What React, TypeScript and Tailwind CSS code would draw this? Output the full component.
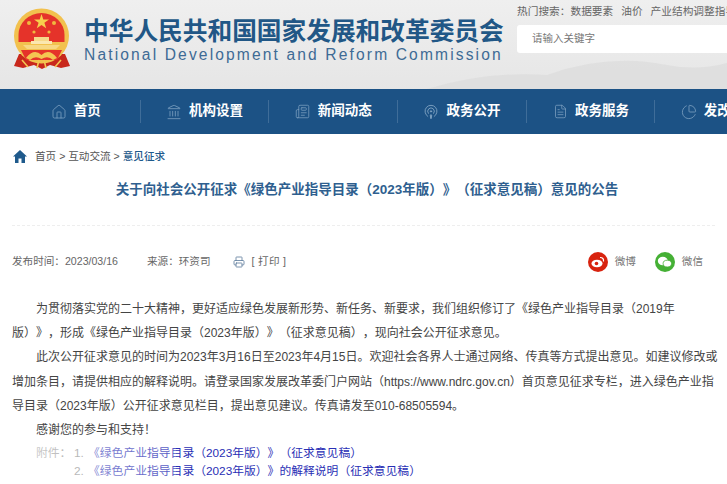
import { Home, Landmark, Newspaper, FileText, ChartPie, Printer, Podcast } from "lucide-react";

const font = { fontFamily: '"Liberation Sans","Noto Sans CJK SC",sans-serif' };

const fw = (s: string) =>
  s
    .replace(/,/g, "\uFF0C")
    .replace(/\(/g, "\uFF08")
    .replace(/\)/g, "\uFF09")
    .replace(/:(?!\/)/g, "\uFF1A")
    .replace(/!/g, "\uFF01");

function Emblem() {
  return (
    <svg width="58" height="62" viewBox="0 0 58 62" className="shrink-0">
      <path d="M6 46 L1 58 L10 60 L21 57 L29 61 L37 57 L48 60 L57 58 L52 46 Z" fill="#c8281c" />
      <circle cx="28.5" cy="28" r="27.5" fill="#f2c14e" />
      <path d="M5.5 27 A23 22 0 0 1 51.5 27 L51.5 34 L5.5 34 Z" fill="#e5332a" />
      <path d="M28.5 6 l1.8 5.4 5.7 0 -4.6 3.4 1.8 5.5 -4.7 -3.4 -4.7 3.4 1.8 -5.5 -4.6 -3.4 5.7 0z" fill="#f6d04d" />
      <circle cx="16" cy="15" r="2" fill="#f0b93f" />
      <circle cx="41" cy="15" r="2" fill="#f0b93f" />
      <circle cx="21" cy="24" r="1.6" fill="#f0b93f" />
      <circle cx="36" cy="24" r="1.6" fill="#f0b93f" />
      <rect x="18" y="33" width="21" height="3" fill="#fbe7b0" />
      <rect x="21" y="29" width="15" height="4" fill="#f6d98a" />
      <path d="M10 37 H47 L43 41 H14 Z" fill="#f7d884" />
      <path d="M8 42 H49 L44 52 H13 Z" fill="#e5332a" />
      <path d="M13 50 Q21 40 28.5 47 Q36 40 44 50 L40 52 Q35 47 28.5 51 Q22 47 17 52 Z" fill="#f4c552" />
      <path d="M9 52 L15 59 M48 52 L42 59 M26 52 L24 60 M31 52 L33 60" stroke="#f4c552" strokeWidth="1.6" />
    </svg>
  );
}

function NavItem({ icon, label }: { icon: React.ReactNode; label: string }) {
  return (
    <div className="flex h-full w-[127.7px] shrink-0 items-center justify-center gap-[7px] whitespace-nowrap text-[13.5px] font-bold text-white">
      <span className="flex w-[16px] justify-center text-[#7fa2c2]">{icon}</span>
      <span>{label}</span>
    </div>
  );
}

function Divider() {
  return <div className="h-[23px] w-px shrink-0 bg-[#3f6d99]" />;
}

export default function App() {
  const nav = [
    { icon: <Home size={16} strokeWidth={1.2} />, label: "首页" },
    { icon: <Landmark size={16} strokeWidth={1.2} />, label: "机构设置" },
    { icon: <Newspaper size={15} strokeWidth={1.2} />, label: "新闻动态" },
    { icon: <Podcast size={16} strokeWidth={1.4} />, label: "政务公开" },
    { icon: <FileText size={15} strokeWidth={1.2} />, label: "政务服务" },
    { icon: <ChartPie size={16} strokeWidth={1.2} />, label: "发改数据" },
  ];
  return (
    <div style={font} className="h-[484px] w-[727px] overflow-hidden bg-white [text-spacing-trim:space-all]">
      <header className="relative flex h-[89px] overflow-hidden bg-gradient-to-b from-[#efefef] to-[#e6e6e6]">
        <svg className="absolute bottom-0 right-0" width="300" height="40" viewBox="0 0 300 40">
          <path d="M0 40 Q60 22 120 26 Q180 4 240 16 Q270 22 300 14 V40Z" fill="#dcdcdc" opacity="0.7" />
        </svg>
        <div className="relative ml-[13px] mt-[8px] shrink-0">
          <Emblem />
        </div>
        <div className="relative ml-[13px] mt-[18px] w-[424px] shrink-0 text-[#215786]">
          <div className="whitespace-nowrap text-[24.7px] font-bold leading-[28px]">中华人民共和国国家发展和改革委员会</div>
          <div className="whitespace-nowrap text-[15.6px] leading-[18px] tracking-[2.13px] text-[#3e6b95]">National Development and Reform Commission</div>
        </div>
        <div className="relative ml-[9px] shrink-0">
          <div className="mt-[3px] flex h-[16px] items-center gap-[8px] whitespace-nowrap text-[10.7px] text-[#666]">
            <span>{fw("热门搜索:数据要素")}</span>
            <span>油价</span>
            <span>产业结构调整指导目录</span>
          </div>
          <div className="mt-[6px] flex h-[28px] w-[260px] items-center rounded-[3px] bg-white pl-[15px] text-[10.5px] text-[#777]">请输入关键字</div>
        </div>
      </header>
      <nav className="flex h-[45px] items-center bg-[#1c5285] pl-[12px]">
        {nav.map((n, i) => (
          <div key={n.label} className="flex h-full shrink-0 items-center">
            <NavItem icon={n.icon} label={n.label} />
            {i < nav.length - 1 && <Divider />}
          </div>
        ))}
      </nav>
      <div className="mt-[14px] flex h-[17px] items-center gap-[8px] pl-[13px] text-[10.6px] text-[#555]">
        <svg width="14" height="13" viewBox="0 0 14 13"><path d="M7 0 L14 6.5 H12 V13 H8.5 V8.5 H5.5 V13 H2 V6.5 H0 Z" fill="#1f5a8c" /></svg>
        <span className="whitespace-nowrap">首页 &gt; 互动交流 &gt; <span className="font-medium text-[#1f5a8c]">意见征求</span></span>
      </div>
      <h1 className="mt-[15px] whitespace-nowrap pl-[7px] text-center text-[13.5px] font-bold leading-[20px] text-[#2f5f8f]">{fw("关于向社会公开征求《绿色产业指导目录(2023年版)》(征求意见稿)意见的公告")}</h1>
      <div className="mx-[12px] mt-[25px] border-t border-dashed border-[#eeeeee]" />
      <div className="mt-[26px] flex h-[20px] items-center pl-[12px] pr-[24px] text-[10.6px] text-[#666]">
        <span className="whitespace-nowrap">{fw("发布时间:2023/03/16")}</span>
        <span className="ml-[29px] whitespace-nowrap">{fw("来源:环资司")}</span>
        <Printer size={12} strokeWidth={1.6} className="ml-[22px] text-[#5a7a9a]" />
        <span className="ml-[7px] whitespace-nowrap tracking-[0.3px]">[ 打印 ]</span>
        <div className="ml-auto flex items-center gap-[7px] text-[#777]">
          <span className="flex h-[20px] w-[20px] items-center justify-center rounded-full bg-[#d8230f]">
            <svg width="14" height="12" viewBox="0 0 14 12"><ellipse cx="6" cy="7.5" rx="5.5" ry="3.8" fill="#fff" /><circle cx="5.5" cy="7.5" r="1.8" fill="#d8230f" /><path d="M9 1.5 Q13 1.5 12.5 5.5" fill="none" stroke="#fff" strokeWidth="1.2" /></svg>
          </span>
          <span>微博</span>
          <span className="ml-[12px] flex h-[20px] w-[20px] items-center justify-center rounded-full bg-[#45b035]">
            <svg width="15" height="12" viewBox="0 0 15 12"><ellipse cx="5.8" cy="5" rx="5" ry="4.2" fill="#fff" /><ellipse cx="10.3" cy="7.6" rx="4.2" ry="3.4" fill="#fff" stroke="#45b035" strokeWidth="0.8" /></svg>
          </span>
          <span>微信</span>
        </div>
      </div>
      <div className="mt-[25px] whitespace-nowrap pl-[12px] pr-[2px] text-[12px] leading-[24.2px] text-[#444]">
        <p className="indent-[24px]">{fw("为贯彻落实党的二十大精神,更好适应绿色发展新形势、新任务、新要求,我们组织修订了《绿色产业指导目录(2019年")}<br />{fw("版)》,形成《绿色产业指导目录(2023年版)》(征求意见稿),现向社会公开征求意见。")}</p>
        <p className="indent-[24px]">{fw("此次公开征求意见的时间为2023年3月16日至2023年4月15日。欢迎社会各界人士通过网络、传真等方式提出意见。如建议修改或")}<br />{fw("增加条目,请提供相应的解释说明。请登录国家发展改革委门户网站(https://www.ndrc.gov.cn)首页意见征求专栏,进入绿色产业指")}<br />{fw("导目录(2023年版)公开征求意见栏目,提出意见建议。传真请发至010-68505594。")}</p>
        <p className="indent-[24px]">{fw("感谢您的参与和支持!")}</p>
        <div className="relative mt-[2px] pl-[24px] text-[11.8px] leading-[18px]">
          <div className="flex">
            <span className="w-[38px] shrink-0 text-[#777]">{fw("附件:")}</span>
            <div className="whitespace-nowrap text-[#2a2fb5]">
              <div className="flex"><span className="w-[14px] text-[#777]">1.</span>{fw("《绿色产业指导目录(2023年版)》(征求意见稿)")}</div>
              <div className="flex"><span className="w-[14px] text-[#777]">2.</span>{fw("《绿色产业指导目录(2023年版)》的解释说明(征求意见稿)")}</div>
            </div>
          </div>
          <div className="absolute left-[24px] top-0 h-[36px] w-[140px] bg-gradient-to-r from-white/60 to-white/20" />
        </div>
      </div>
    </div>
  );
}
